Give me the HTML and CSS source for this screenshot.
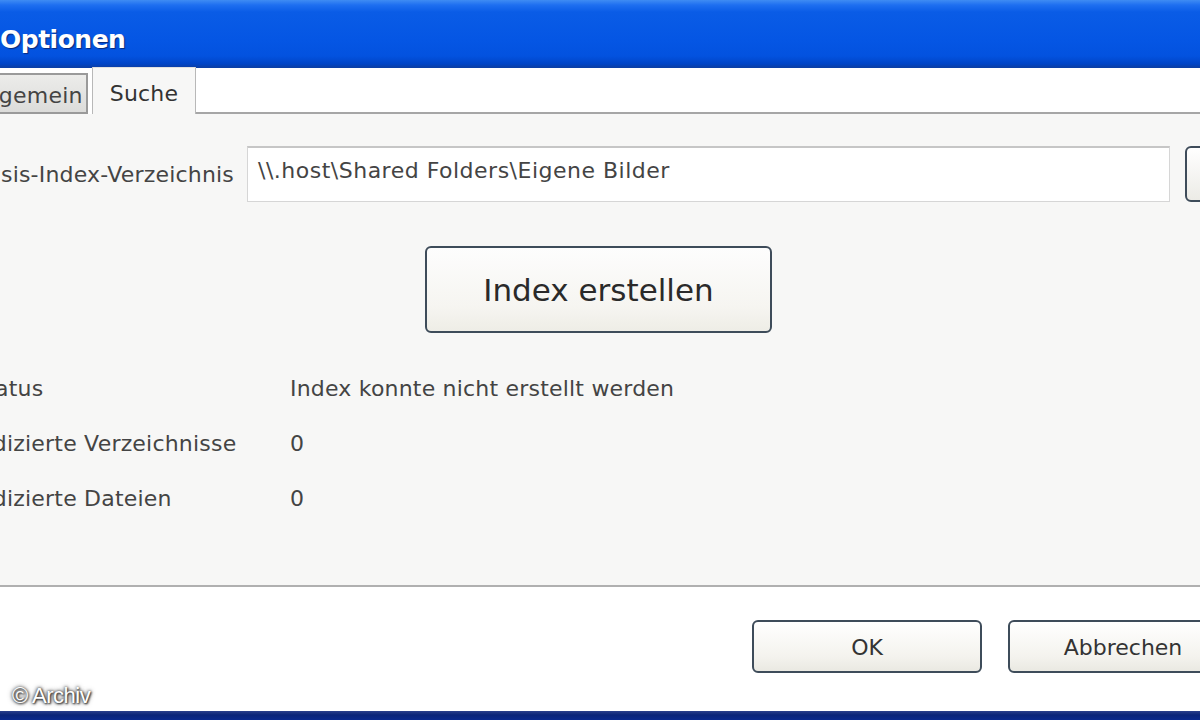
FILE: index.html
```html
<!DOCTYPE html>
<html lang="de">

<head>
    <meta charset="UTF-8">
    <title>Optionen</title>
    <link rel="stylesheet" href="styles.css">
</head>

<body>
    <div class="window">
        <div class="titlebar">
            <span class="title">Optionen</span>
        </div>

        <div class="tabs">
            <div class="tab">Allgemein</div>
            <div class="tab active">Suche</div>
            <div class="tab-fill"></div>
        </div>

        <div class="panel">
            <div class="path-row">
                <label class="path-label" for="path">Basis-Index-Verzeichnis</label>
                <div class="field" id="path">\\.host\Shared Folders\Eigene Bilder</div>
                <button type="button" class="browse">...</button>
            </div>

            <div class="action">
                <button type="button" class="big-btn">Index erstellen</button>
            </div>

            <div class="stats">
                <div class="stat-label">Status</div>
                <div class="stat-value">Index konnte nicht erstellt werden</div>
                <div class="stat-label">Indizierte Verzeichnisse</div>
                <div class="stat-value">0</div>
                <div class="stat-label">Indizierte Dateien</div>
                <div class="stat-value">0</div>
            </div>
        </div>

        <div class="footer">
            <button type="button" class="btn">OK</button>
            <button type="button" class="btn">Abbrechen</button>
        </div>
        <div class="frame-bottom"></div>
    </div>

    <div class="credit">&copy; Archiv</div>
</body>

</html>
```

FILE: styles.css
```css
* {
    box-sizing: border-box;
}

html,
body {
    margin: 0;
    width: 1200px;
    height: 720px;
    overflow: hidden;
    background: #fff;
}

body {
    position: relative;
    font-family: "DejaVu Sans", sans-serif;
    letter-spacing: 0.2px;
    color: #333;
}

.window {
    width: 1280px;
    margin-left: -22px;
    display: flex;
    flex-direction: column;
}

/* blue xp title bar */
.titlebar {
    height: 68px;
    padding-left: 22px;
    display: flex;
    align-items: center;
    background: linear-gradient(to bottom,
            #3f8cf3 0px, #1e6ff0 5px, #0a5ce6 12px, #0556e4 40px,
            #0352df 56px, #0044c6 64px, #0a3fa8 67px, #0a3fa8 68px);
}

.title {
    font-weight: bold;
    font-size: 25px;
    color: #fff;
    letter-spacing: -0.5px;
    text-shadow: 1px 1px 1px #0a2a7a;
    margin-top: 10px;
}

/* tabs */
.tabs {
    height: 46px;
    display: flex;
    align-items: flex-end;
    background: #fff;
}

.tab {
    height: 41px;
    width: 110px;
    padding-top: 4px;
    display: flex;
    align-items: center;
    text-indent: -7px;
    font-size: 22px;
    color: #444;
    background: linear-gradient(to bottom, #ececea, #dcdcda);
    border: 2px solid #9a9a9a;
    border-left: none;
    overflow: hidden;
    white-space: nowrap;
}

.tab.active {
    height: 47px;
    width: 104px;
    margin-left: 4px;
    padding-top: 4px;
    text-indent: 0;
    justify-content: center;
    background: #f7f7f6;
    border: 1px solid #b8b8b8;
    border-bottom: none;
    border-top: 1px solid #e0e0e0;
    color: #333;
}

.tab-fill {
    flex: 1;
    height: 46px;
    border-bottom: 2px solid #a6a6a6;
}

/* main panel */
.panel {
    height: 473px;
    background: #f7f7f6;
    border-bottom: 2px solid #b0b0b0;
    padding-top: 32px;
}

.path-row {
    display: flex;
    align-items: center;
}

.path-label {
    width: 269px;
    text-indent: -6px;
    white-space: nowrap;
    font-size: 22px;
    color: #444;
}

.field {
    width: 923px;
    height: 56px;
    padding: 10px 10px 0;
    background: #fff;
    border: 1px solid #d6d6d6;
    border-top: 2px solid #c6c6c6;
    font-size: 22px;
    letter-spacing: 0.5px;
    color: #444;
    white-space: nowrap;
}

.browse {
    margin-left: 15px;
    width: 50px;
    height: 56px;
    border: 2px solid #3e4c5a;
    border-radius: 6px;
    background: linear-gradient(to bottom, #fff, #ecebe6);
    font-size: 20px;
    color: #222;
}

.action {
    padding-left: 447px;
    margin-top: 44px;
}

.big-btn {
    width: 347px;
    height: 87px;
    border: 2px solid #3e4c5a;
    border-radius: 6px;
    background: linear-gradient(to bottom, #fdfdfd, #f6f5f1 70%, #eeede6);
    font-family: "DejaVu Sans", sans-serif;
    font-size: 31px;
    color: #2a2a2a;
    padding-top: 2px;
}

.stats {
    display: grid;
    grid-template-columns: 312px 1fr;
    row-gap: 29px;
    margin-top: 43px;
    font-size: 22px;
    line-height: 26px;
    color: #444;
}

.stat-label {
    text-indent: -6px;
    white-space: nowrap;
}

/* dialog buttons */
.footer {
    height: 124px;
    background: #fff;
    display: flex;
    gap: 26px;
    padding-left: 774px;
    padding-top: 33px;
}

.btn {
    width: 230px;
    height: 53px;
    border: 2px solid #3e4c5a;
    border-radius: 6px;
    background: linear-gradient(to bottom, #fff, #f4f3ee 70%, #eae9e2);
    font-family: "DejaVu Sans", sans-serif;
    font-size: 22px;
    color: #333;
    padding-top: 3px;
}

.frame-bottom {
    height: 10px;
    background: linear-gradient(to bottom, #2a3f8a, #0a2478 40%, #0b2a90);
}

.credit {
    position: absolute;
    left: 12px;
    top: 683px;
    font-family: "Liberation Sans", Arial, sans-serif;
    font-size: 22px;
    letter-spacing: -0.5px;
    color: #fff;
    text-shadow: 0 0 3px #333, 0 0 5px #555, 1px 1px 2px #333;
}
```
